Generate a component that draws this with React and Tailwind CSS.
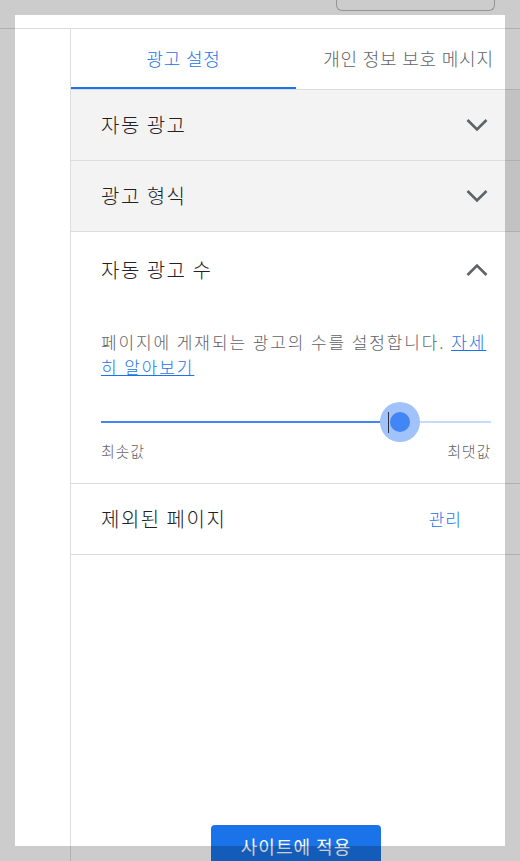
import React, { useState } from "react";

const Chevron = ({ up }) => (
  <svg width="30" height="30" viewBox="0 0 30 30" className="shrink-0">
    <polyline
      points={up ? "5.5,20 15,10.5 24.5,20" : "5.5,10 15,19.5 24.5,10"}
      fill="none"
      stroke="#5f6368"
      strokeWidth="2.6"
    />
  </svg>
);

const Row = ({ title, gray, up }) => (
  <div
    className={`h-[71px] flex items-center justify-between pl-[30px] pr-[29px] border-b border-[#dadce0] ${
      gray ? "bg-[#f3f3f3]" : "bg-white"
    }`}
  >
    <span className="text-[20px] tracking-[1.5px] font-light text-[#202124]">{title}</span>
    <Chevron up={up} />
  </div>
);

export default function App() {
  const [tab] = useState(0);
  const value = 74;

  return (
    <div className="relative w-[520px] h-[861px] overflow-hidden bg-white font-['Noto_Sans_CJK_KR','Noto_Sans',sans-serif]">
      <div className="flex flex-col h-[867px]">
        {/* header */}
        <div className="h-[29px] shrink-0 border-b border-[#dadce0] flex justify-end pr-[25px]">
          <div className="w-[159px] h-[11px] border border-t-0 border-[#b8bbbf] rounded-b-[6px]" />
        </div>

        <div className="flex flex-1 min-h-0">
          <div className="w-[71px] shrink-0 border-r border-[#dadce0]" />

          <div className="w-[450px] shrink-0 flex flex-col">
            {/* tabs */}
            <div className="flex h-[61px] shrink-0 border-b border-[#dadce0]">
              {["광고 설정", "개인 정보 보호 메시지"].map((t, i) => (
                <div
                  key={t}
                  className={`w-[225px] flex items-center justify-center text-[18px] tracking-[0.8px] font-light whitespace-nowrap border-b-2 ${
                    i === tab
                      ? "text-[#1a73e8] border-[#1a73e8]"
                      : "text-[#5f6368] border-transparent"
                  }`}
                >
                  {t}
                </div>
              ))}
            </div>

            <Row title="자동 광고" gray />
            <Row title="광고 형식" gray />

            {/* expanded section */}
            <div className="border-b border-[#dadce0]">
              <div className="h-[71px] flex items-center justify-between pl-[30px] pr-[29px] pt-[4px]">
                <span className="text-[20px] tracking-[1.5px] font-light text-[#202124]">자동 광고 수</span>
                <Chevron up />
              </div>
              <div className="px-[30px] pt-[26px] pb-[20px]">
                <p className="text-[17px] tracking-[1.9px] font-light leading-[25px] text-[#5f6368] break-all">
                  페이지에 게재되는 광고의 수를 설정합니다.{" "}
                  <a className="text-[#1a73e8] underline">자세히 알아보기</a>
                </p>
                <div className="relative h-[40px] mt-[23px]">
                  <div className="absolute left-0 right-0 top-[19px] h-[2px] bg-[#c6dafc]" />
                  <div
                    className="absolute left-0 top-[19px] h-[2px] bg-[#4285f4]"
                    style={{ width: `${value}%` }}
                  />
                  <div
                    className="absolute top-0 w-[40px] h-[40px] rounded-full bg-[#a1c2fa] flex items-center justify-center"
                    style={{ left: `${value}%`, marginLeft: "-10px" }}
                  >
                    <div className="w-[20px] h-[20px] rounded-full bg-[#4285f4]" />
                    <div className="absolute left-[8px] top-[10px] w-[1px] h-[21px] bg-[#303134]" />
                  </div>
                </div>
                <div className="flex justify-between text-[15px] tracking-[0.8px] font-light text-[#5f6368] -mt-[2px]">
                  <span>최솟값</span>
                  <span>최댓값</span>
                </div>
              </div>
            </div>

            <div className="h-[71px] flex items-center justify-between pl-[30px] pr-[59px] border-b border-[#dadce0]">
              <span className="text-[20px] tracking-[1.5px] font-light text-[#202124]">제외된 페이지</span>
              <span className="text-[17px] tracking-[1px] font-light text-[#1a73e8]">관리</span>
            </div>

            <div className="flex-1" />

            <div className="flex justify-center">
              <button className="w-[170px] h-[42px] rounded-t-[4px] bg-[#1a73e8] text-white text-[18px] tracking-[1px]">
                사이트에 적용
              </button>
            </div>
          </div>
        </div>
      </div>

      {/* spotlight overlay */}
      <div className="absolute left-[15px] top-[15px] w-[490px] h-[831px] pointer-events-none shadow-[0_0_0_9999px_rgba(0,0,0,0.2)]" />
    </div>
  );
}
